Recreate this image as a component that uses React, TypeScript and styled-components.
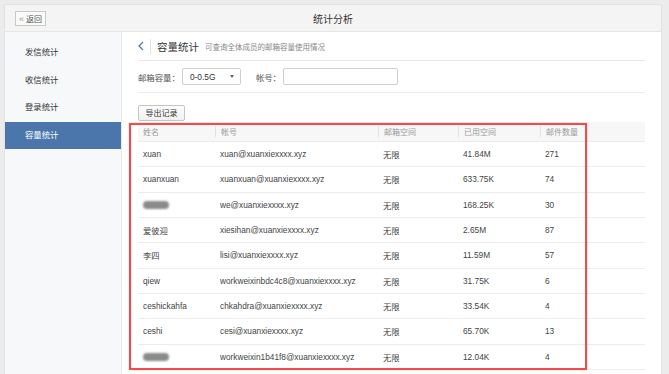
import React from 'react';
import styled, { createGlobalStyle } from 'styled-components';

const GlobalStyle = createGlobalStyle`
    html, body {
        margin: 0;
        padding: 0;
        background: #ececec;
        font-family: "Liberation Sans", "Noto Sans CJK SC", sans-serif;
        overflow: hidden;
    }
`;

const Frame = styled.div`
    margin: 4px 7px 0 4px;
    height: 370px;
    background: #fff;
    border: 1px solid #e2e2e2;
    border-bottom: none;
    box-sizing: border-box;
    display: flex;
    flex-direction: column;
`;

const Header = styled.div`
    position: relative;
    height: 26px;
    flex-shrink: 0;
    background: #f4f4f4;
    border-bottom: 1px solid #e6e6e6;
    display: flex;
    align-items: center;
    justify-content: center;
`;

const BackButton = styled.button`
    position: absolute;
    left: 10px;
    top: 6px;
    width: 31px;
    height: 15px;
    padding: 0;
    border: 1px solid #c9c9c9;
    background: #fafafa;
    color: #555;
    font-family: inherit;
    font-size: 8px;
    display: flex;
    align-items: center;
    justify-content: center;
`;

const BackArrow = styled.span`
    color: #999;
    font-size: 9px;
    margin-right: 2px;
`;

const Title = styled.div`
    font-size: 10px;
    color: #333;
`;

const Body = styled.div`
    flex: 1;
    display: flex;
    min-height: 0;
`;

const Sidebar = styled.div`
    width: 117px;
    flex-shrink: 0;
    background: #f7f8fa;
    border-right: 1px solid #e8e8e8;
    padding-top: 7px;
    box-sizing: border-box;
`;

const NavItem = styled.div<{ $active?: boolean }>`
    height: 27.5px;
    line-height: 27.5px;
    padding-left: 20px;
    font-size: 8.4px;
    color: ${(p) => (p.$active ? '#fff' : '#333')};
    background: ${(p) => (p.$active ? '#4a76ab' : 'transparent')};
`;

const Content = styled.div`
    flex: 1;
    padding: 0 16px;
    min-width: 0;
`;

const TitleRow = styled.div`
    height: 28px;
    border-bottom: 1px solid #e8e8e8;
    display: flex;
    align-items: center;
`;

const Chevron = styled.span`
    width: 12px;
    display: flex;
    align-items: center;
`;

const Divider = styled.span`
    width: 1px;
    height: 15px;
    background: #e2e2e2;
    margin-right: 6px;
`;

const PageTitle = styled.span`
    font-size: 10.5px;
    color: #333;
    margin-right: 6px;
`;

const SubTitle = styled.span`
    font-size: 7.5px;
    color: #888;
`;

const FilterRow = styled.div`
    height: 31px;
    border-bottom: 1px solid #ececec;
    display: flex;
    align-items: center;
    font-size: 8.4px;
    color: #555;
`;

const Label = styled.span`
    margin-right: 2px;
`;

const Select = styled.div`
    width: 59px;
    height: 17px;
    border: 1px solid #cfcfcf;
    border-radius: 2px;
    box-sizing: border-box;
    display: flex;
    align-items: center;
    justify-content: space-between;
    padding: 0 6px 0 7px;
    color: #333;
    margin-right: 15px;
`;

const Caret = styled.span`
    width: 0;
    height: 0;
    border-left: 2.5px solid transparent;
    border-right: 2.5px solid transparent;
    border-top: 3px solid #666;
`;

const Input = styled.div`
    width: 115px;
    height: 17px;
    border: 1px solid #cfcfcf;
    border-radius: 2px;
    box-sizing: border-box;
`;

const ActionRow = styled.div`
    padding-top: 9px;
    height: 29px;
    box-sizing: border-box;
`;

const ExportButton = styled.button`
    width: 47px;
    height: 16px;
    padding: 0;
    border: 1px solid #c6c6c6;
    border-radius: 2px;
    background: linear-gradient(#fdfdfd, #f1f1f1);
    font-family: inherit;
    font-size: 8px;
    color: #333;
`;

const TableWrap = styled.div`
    position: relative;
`;

const Highlight = styled.div`
    position: absolute;
    left: -9px;
    top: 1px;
    width: 458px;
    height: 247px;
    border: 2px solid #f44a4a;
    box-sizing: border-box;
    box-shadow: 0 0 1px rgba(255, 80, 80, 0.6);
    pointer-events: none;
`;

const cols = '77px 163px 80px 82px 1fr';

const HeadRow = styled.div`
    display: grid;
    grid-template-columns: ${cols};
    height: 20px;
    background: #f7f7f7;
    border-bottom: 1px solid #ebebeb;
    box-sizing: border-box;
`;

const HeadCell = styled.div<{ $first?: boolean }>`
    display: flex;
    align-items: center;
    padding-left: 5px;
    font-size: 8px;
    color: #9a9a9a;
    border-left: ${(p) => (p.$first ? 'none' : '1px solid #e2e2e2')};
    margin: 4px 0;
`;

const Row = styled.div`
    display: grid;
    grid-template-columns: ${cols};
    height: 25.33px;
    border-bottom: 1px solid #ededed;
    box-sizing: border-box;
`;

const Cell = styled.div`
    display: flex;
    align-items: center;
    padding-left: 5px;
    font-size: 8.3px;
    color: #444;
    white-space: nowrap;
`;

const Blur = styled.span`
    display: inline-block;
    width: 26px;
    height: 8px;
    border-radius: 4px;
    background: #8a8a8a;
    filter: blur(1px);
`;

const rows = [
    { name: 'xuan', email: 'xuan@xuanxiexxxx.xyz', used: '41.84M', count: '271' },
    { name: 'xuanxuan', email: 'xuanxuan@xuanxiexxxx.xyz', used: '633.75K', count: '74' },
    { name: '', email: 'we@xuanxiexxxx.xyz', used: '168.25K', count: '30' },
    { name: '爱彼迎', email: 'xiesihan@xuanxiexxxx.xyz', used: '2.65M', count: '87' },
    { name: '李四', email: 'lisi@xuanxiexxxx.xyz', used: '11.59M', count: '57' },
    { name: 'qiew', email: 'workweixinbdc4c8@xuanxiexxxx.xyz', used: '31.75K', count: '6' },
    { name: 'ceshickahfa', email: 'chkahdra@xuanxiexxxx.xyz', used: '33.54K', count: '4' },
    { name: 'ceshi', email: 'cesi@xuanxiexxxx.xyz', used: '65.70K', count: '13' },
    { name: '', email: 'workweixin1b41f8@xuanxiexxxx.xyz', used: '12.04K', count: '4' },
];

const App: React.FC = () => {
    return (
        <>
            <GlobalStyle />
            <Frame>
                <Header>
                    <BackButton>
                        <BackArrow>«</BackArrow>返回
                    </BackButton>
                    <Title>统计分析</Title>
                </Header>
                <Body>
                    <Sidebar>
                        <NavItem>发信统计</NavItem>
                        <NavItem>收信统计</NavItem>
                        <NavItem>登录统计</NavItem>
                        <NavItem $active>容量统计</NavItem>
                    </Sidebar>
                    <Content>
                        <TitleRow>
                            <Chevron>
                                <svg width="6" height="10" viewBox="0 0 6 10">
                                    <path d="M5 1 L1 5 L5 9" fill="none" stroke="#4a76ab" strokeWidth="1.2" />
                                </svg>
                            </Chevron>
                            <Divider />
                            <PageTitle>容量统计</PageTitle>
                            <SubTitle>可查询全体成员的邮箱容量使用情况</SubTitle>
                        </TitleRow>
                        <FilterRow>
                            <Label>邮箱容量：</Label>
                            <Select>
                                0-0.5G
                                <Caret />
                            </Select>
                            <Label>帐号：</Label>
                            <Input />
                        </FilterRow>
                        <ActionRow>
                            <ExportButton>导出记录</ExportButton>
                        </ActionRow>
                        <TableWrap>
                            <HeadRow>
                                <HeadCell $first>姓名</HeadCell>
                                <HeadCell>帐号</HeadCell>
                                <HeadCell>邮箱空间</HeadCell>
                                <HeadCell>已用空间</HeadCell>
                                <HeadCell>邮件数量</HeadCell>
                            </HeadRow>
                            {rows.map((r, i) => (
                                <Row key={i}>
                                    <Cell>{r.name ? r.name : <Blur />}</Cell>
                                    <Cell>{r.email}</Cell>
                                    <Cell>无限</Cell>
                                    <Cell>{r.used}</Cell>
                                    <Cell>{r.count}</Cell>
                                </Row>
                            ))}
                            <Highlight />
                        </TableWrap>
                    </Content>
                </Body>
            </Frame>
        </>
    );
};

export default App;
